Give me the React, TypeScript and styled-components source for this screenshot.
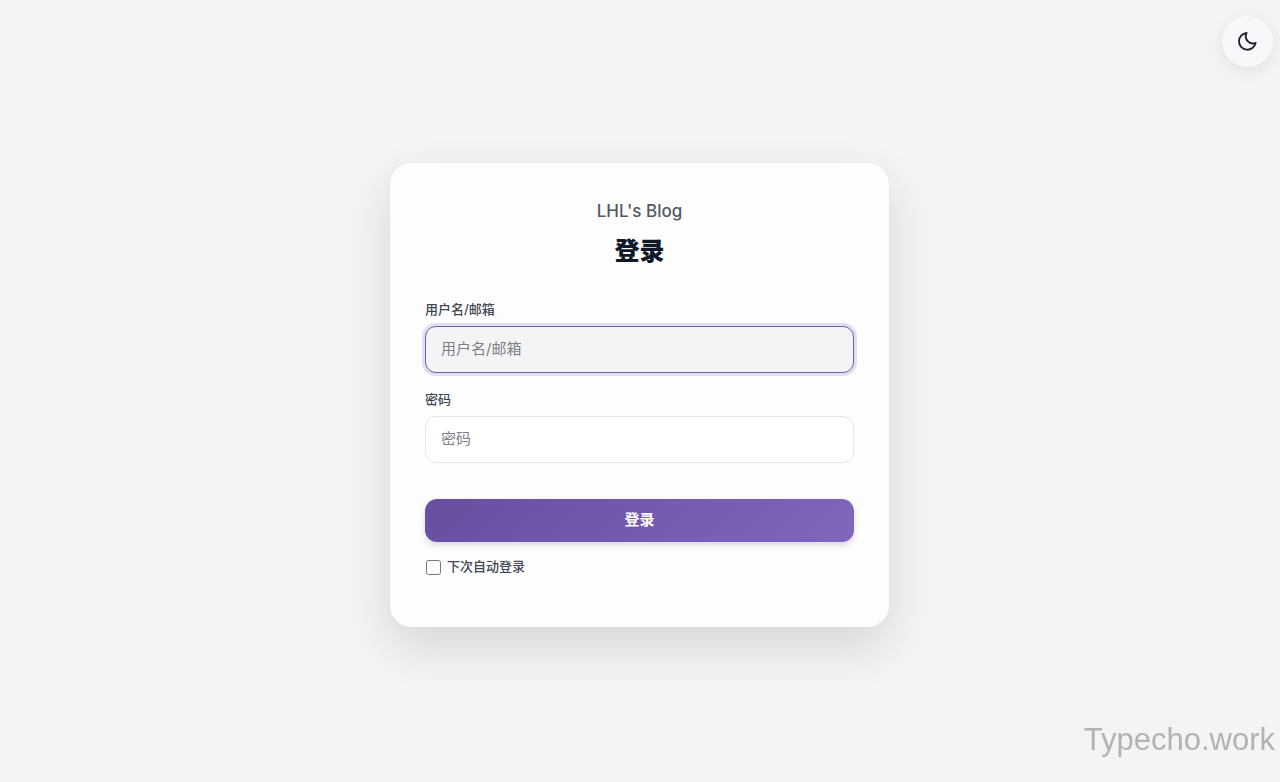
import React from "react";
import styled, { createGlobalStyle } from "styled-components";

const GlobalStyle = createGlobalStyle`
  *, *::before, *::after { box-sizing: border-box; }
  body {
    margin: 0;
    background: #f4f4f5;
    color: #111827;
    font-family: Inter, "Noto Sans CJK SC", sans-serif;
  }
  button, input { font: inherit; }
`;

const Page = styled.main`
  display: flex;
  align-items: center;
  justify-content: center;
  min-height: 100vh;
  padding: 24px 17px 16px 16px;
`;

const ThemeToggle = styled.button`
  position: fixed;
  top: 16px;
  right: 7px;
  display: grid;
  place-items: center;
  width: 51px;
  height: 51px;
  padding: 0;
  border: 0;
  border-radius: 50%;
  background: #f8f8fa;
  color: #1f2430;
  box-shadow: 0 4px 16px rgba(0, 0, 0, 0.08);
  cursor: pointer;
`;

const Card = styled.section`
  width: 100%;
  max-width: 499px;
  padding: 36px 35px 50px;
  border-radius: 21px;
  background: #fdfdfd;
  box-shadow: 0 20px 48px rgba(0, 0, 0, 0.12), 0 0 2px rgba(0, 0, 0, 0.06);
`;

const Header = styled.header`
  margin-bottom: 28px;
  text-align: center;
`;

const SiteName = styled.p`
  margin: 0;
  color: #555962;
  font-size: 17px;
  font-weight: 500;
  line-height: 24px;
`;

const Title = styled.h1`
  margin: 8px 0 0;
  font-size: 25px;
  font-weight: 800;
  line-height: 40px;
`;

const Field = styled.div`
  display: flex;
  flex-direction: column;
  gap: 6px;
  margin-bottom: 16px;
`;

const Label = styled.label`
  color: #414753;
  font-size: 13px;
  font-weight: 500;
  line-height: 21px;
`;

const TextInput = styled.input<{ $active?: boolean }>`
  width: 100%;
  height: 47px;
  padding: 0 15px 2px;
  border: 1px solid ${(p) => (p.$active ? "#6f60ae" : "#e6e6ea")};
  border-radius: 11px;
  outline: 0;
  background: ${(p) => (p.$active ? "#f4f4f7" : "#ffffff")};
  box-shadow: ${(p) => (p.$active ? "0 0 0 3px #e2def1" : "none")};
  color: #111827;
  font-size: 15px;

  &::placeholder { color: #808084; }
`;

const SubmitButton = styled.button`
  width: 100%;
  height: 43px;
  margin-top: 20px;
  padding: 0 0 4px;
  border: 0;
  border-radius: 12px;
  background: linear-gradient(135deg, #674ea1, #8066bd);
  box-shadow: 0 3px 6px rgba(60, 40, 90, 0.18);
  color: #ffffff;
  font-size: 15px;
  font-weight: 700;
  cursor: pointer;
`;

const Remember = styled.label`
  display: flex;
  align-items: center;
  gap: 6px;
  width: fit-content;
  margin-top: 13px;
  color: #414753;
  font-size: 13px;
  font-weight: 500;
  line-height: 22px;
`;

const Checkbox = styled.input`
  width: 15px;
  height: 15px;
  margin: 3px 0 0 1px;
`;

const Watermark = styled.span`
  position: fixed;
  right: 5px;
  bottom: 24px;
  color: #b3b3b4;
  font-family: "Liberation Sans", Arial, sans-serif;
  font-size: 31px;
  line-height: 36px;
`;

export default function App() {
  return (
    <>
      <GlobalStyle />
      <ThemeToggle type="button" aria-label="切换主题">
        <svg
          width="21"
          height="21"
          viewBox="0 0 24 24"
          fill="none"
          stroke="currentColor"
          strokeWidth="2.2"
          strokeLinecap="round"
          strokeLinejoin="round"
          aria-hidden="true"
        >
          <path d="M21.3 13.6A9.6 9.6 0 1 1 11 2.2 8.2 8.2 0 0 0 21.3 13.6z" />
        </svg>
      </ThemeToggle>
      <Page>
        <Card>
          <Header>
            <SiteName>LHL's Blog</SiteName>
            <Title>登录</Title>
          </Header>
          <form onSubmit={(event) => event.preventDefault()}>
            <Field>
              <Label htmlFor="name">用户名/邮箱</Label>
              <TextInput id="name" type="text" placeholder="用户名/邮箱" $active />
            </Field>
            <Field>
              <Label htmlFor="password">密码</Label>
              <TextInput id="password" type="password" placeholder="密码" />
            </Field>
            <SubmitButton type="submit">登录</SubmitButton>
            <Remember>
              <Checkbox type="checkbox" name="remember" />
              下次自动登录
            </Remember>
          </form>
        </Card>
      </Page>
      <Watermark>Typecho.work</Watermark>
    </>
  );
}
